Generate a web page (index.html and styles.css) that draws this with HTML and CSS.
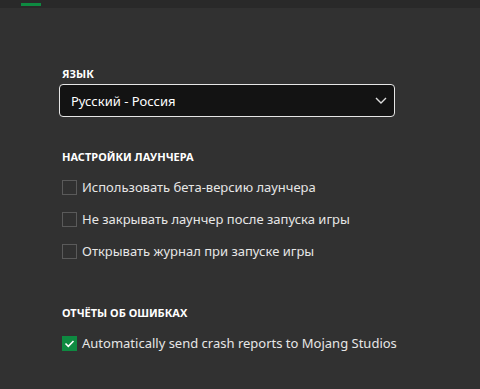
FILE: index.html
```html
<!DOCTYPE html>
<html lang="ru">
<head>
  <meta charset="UTF-8">
  <title>Настройки</title>
  <link rel="stylesheet" href="styles.css">
</head>
<body>
  <div class="topbar">
    <div class="tab-active"></div>
  </div>

  <div class="settings">
    <div class="group group-lang">
      <div class="group-title">ЯЗЫК</div>
      <div class="select">
        <span>Русский - Россия</span>
        <svg class="chevron" width="12" height="7" viewBox="0 0 12 7">
          <path d="M1 1 L6 6 L11 1" fill="none" stroke="#ddd" stroke-width="1.4"/>
        </svg>
      </div>
    </div>

    <div class="group group-launcher">
      <div class="group-title">НАСТРОЙКИ ЛАУНЧЕРА</div>
      <label class="check"><span class="box"></span>Использовать бета-версию лаунчера</label>
      <label class="check"><span class="box"></span>Не закрывать лаунчер после запуска игры</label>
      <label class="check"><span class="box"></span>Открывать журнал при запуске игры</label>
    </div>

    <div class="group">
      <div class="group-title">ОТЧЁТЫ ОБ ОШИБКАХ</div>
      <label class="check"><span class="box checked">
        <svg width="15" height="15" viewBox="0 0 15 15">
          <path d="M3.5 7.5 L6.3 10.3 L11.5 5" fill="none" stroke="#fff" stroke-width="1.6"/>
        </svg>
      </span>Automatically send crash reports to Mojang Studios</label>
    </div>
  </div>
</body>
</html>
```

FILE: styles.css
```css
* {
  margin: 0;
  padding: 0;
  box-sizing: border-box;
}

body {
  background-color: #313131;
  font-family: "Noto Sans", "Open Sans", sans-serif;
  color: #e8e8e8;
  height: 389px;
  overflow: hidden;
}

.topbar {
  height: 8px;
  background-color: #292929;
  padding-left: 21px;
  padding-top: 3px;
}

.tab-active {
  width: 20px;
  height: 3px;
  background-color: #0e8a41;
}

.settings {
  padding: 58px 0 0 59px;
  width: 395px;
}

.group-lang {
  margin-bottom: 32px;
}

.group-launcher {
  margin-bottom: 38px;
}

.group-title {
  font-size: 11px;
  font-weight: bold;
  color: #fff;
  padding-left: 3px;
  line-height: 16px;
  margin-bottom: 6px;
}

.group-lang .group-title {
  margin-bottom: 2px;
}

.select {
  height: 33px;
  border: 1px solid #e6e6e6;
  border-radius: 4px;
  background-color: #131313;
  display: flex;
  align-items: center;
  justify-content: space-between;
  padding: 0 7px 0 11px;
  font-size: 13px;
  color: #fff;
}

.chevron {
  margin-top: -1px;
}

.check {
  display: flex;
  align-items: center;
  height: 32px;
  padding-left: 3px;
  font-size: 13px;
  color: #e6e6e6;
  white-space: nowrap;
}

.box {
  width: 15px;
  height: 15px;
  border: 1px solid #5a5a5a;
  margin-right: 5px;
  flex-shrink: 0;
}

.box.checked {
  border: none;
  background-color: #0e8a41;
}

.box.checked svg {
  display: block;
}
```
